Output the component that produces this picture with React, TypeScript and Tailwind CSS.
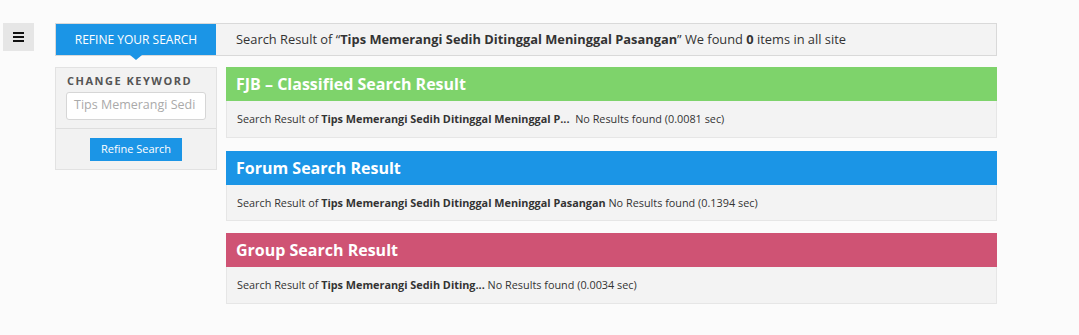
import React from "react";

const font = { fontFamily: '"Open Sans", "Noto Sans", sans-serif' };

function Card({
  title,
  color,
  keyword,
  time,
  h = 37,
  extraSpace = false,
}: {
  title: string;
  color: string;
  keyword: string;
  time: string;
  h?: number;
  extraSpace?: boolean;
}) {
  return (
    <div className="flex flex-col">
      <div className={`h-[34px] flex items-center px-[10px] text-white font-bold text-[16px] ${color}`}>{title}</div>
      <div
        className={`${h === 37 ? "h-[37px]" : "h-[36px]"} flex items-center px-[10px] pt-[1px] bg-[#f3f3f3] border-b border-x border-[#e6e6e6] text-[10.85px] text-[#333]`}
      >
        <span>
          Search Result of <b>{keyword}</b>
          {extraSpace ? "\u00a0 " : " "}No Results found ({time} sec)
        </span>
      </div>
    </div>
  );
}

export default function App() {
  return (
    <div style={font} className="w-[1079px] h-[335px] bg-[#fbfbfb] relative">
      <div className="flex pt-[23px]">
        <div className="ml-[3px] w-[31px] h-[28px] bg-[#e6e6e6] flex flex-col items-center justify-center gap-[2px]">
          <div className="w-[11px] h-[2px] bg-[#111]" />
          <div className="w-[11px] h-[2px] bg-[#111]" />
          <div className="w-[11px] h-[2px] bg-[#111]" />
        </div>
        <div className="ml-[21px] w-[942px] flex flex-col">
          <div className="h-[33px] flex border border-[#d9d9d9] bg-[#f3f3f3]">
            <div className="relative w-[160px] bg-[#1b95e6] text-white text-[12px] flex items-center justify-center uppercase">
              Refine your search
              <div className="absolute left-[74px] bottom-[-5px] w-0 h-0 border-l-[6px] border-r-[6px] border-t-[5px] border-l-transparent border-r-transparent border-t-[#1b95e6]" />
            </div>
            <div className="flex items-center pl-[20px] text-[12.85px] text-[#333]">
              <span>
                Search Result of “<b>Tips Memerangi Sedih Ditinggal Meninggal Pasangan</b>” We found <b>0</b> items in all site
              </span>
            </div>
          </div>
          <div className="flex mt-[11px]">
            <div className="w-[162px] self-start border border-[#e2e2e2] bg-[#f2f2f2] flex flex-col">
              <div className="px-[10px] pt-[5px] pb-[8px]">
                <div className="text-[11px] font-bold tracking-[1.5px] text-[#555] uppercase pl-[1px]">Change keyword</div>
                <div className="mt-[2px] h-[28px] bg-white border border-[#d6d6d6] rounded-[3px] flex items-center px-[7px] text-[12.5px] text-[#aaa] overflow-hidden whitespace-nowrap">
                  Tips Memerangi Sedi
                </div>
              </div>
              <div className="border-t border-[#dedede] flex justify-center pt-[9px] pb-[8px]">
                <div className="w-[92px] h-[23px] bg-[#1b95e6] text-white text-[11px] flex items-center justify-center">
                  Refine Search
                </div>
              </div>
            </div>
            <div className="ml-[9px] flex-1 flex flex-col">
              <Card title="FJB – Classified Search Result" color="bg-[#7ed36b]" keyword="Tips Memerangi Sedih Ditinggal Meninggal P..." time="0.0081" extraSpace />
              <div className="h-[13px]" />
              <Card title="Forum Search Result" color="bg-[#1b95e6]" keyword="Tips Memerangi Sedih Ditinggal Meninggal Pasangan" time="0.1394" h={36} />
              <div className="h-[12px]" />
              <Card title="Group Search Result" color="bg-[#cf5374]" keyword="Tips Memerangi Sedih Diting..." time="0.0034" />
            </div>
          </div>
        </div>
      </div>
    </div>
  );
}
